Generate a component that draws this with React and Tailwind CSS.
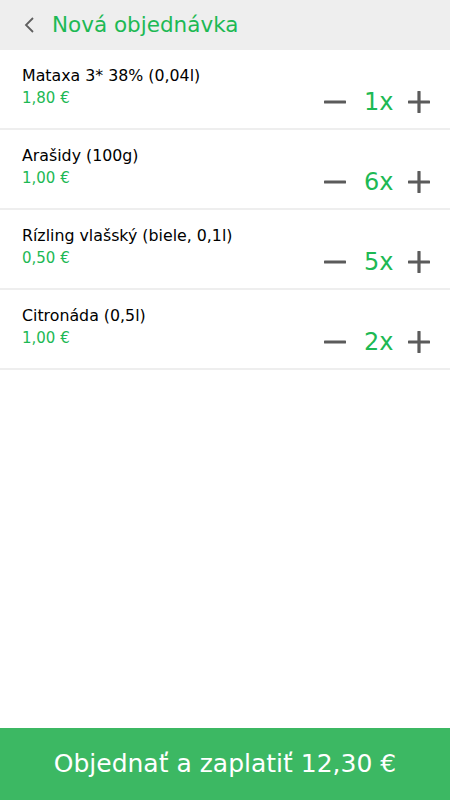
import React, { useState } from 'react';

const items = [
  { name: 'Mataxa 3* 38% (0,04l)', price: '1,80 €', qty: 1 },
  { name: 'Arašidy (100g)', price: '1,00 €', qty: 6 },
  { name: 'Rízling vlašský (biele, 0,1l)', price: '0,50 €', qty: 5 },
  { name: 'Citronáda (0,5l)', price: '1,00 €', qty: 2 },
];

const Minus = () => (
  <svg width="22" height="22" viewBox="0 0 22 22">
    <line x1="1" y1="11" x2="21" y2="11" stroke="#5b5b5b" strokeWidth="3.2" strokeLinecap="round" />
  </svg>
);

const Plus = () => (
  <svg width="22" height="22" viewBox="0 0 22 22">
    <line x1="1" y1="11" x2="21" y2="11" stroke="#5b5b5b" strokeWidth="3.2" strokeLinecap="round" />
    <line x1="11" y1="1" x2="11" y2="21" stroke="#5b5b5b" strokeWidth="3.2" strokeLinecap="round" />
  </svg>
);

const App = () => {
  const [order] = useState(items);

  return (
    <div className="h-[800px] w-[450px] flex flex-col bg-white font-['DejaVu_Sans',sans-serif]">
      {/* header */}
      <div className="h-[50px] bg-[#eeeeee] flex items-center pl-6 gap-4 shrink-0">
        <svg width="12" height="18" viewBox="0 0 12 18">
          <polyline points="9,2 2,9 9,16" fill="none" stroke="#5f5f5f" strokeWidth="1.8" />
        </svg>
        <h1 className="text-[#1db954] text-[21.5px]">Nová objednávka</h1>
      </div>

      {/* items */}
      <div className="flex-1">
        {order.map((it) => (
          <div key={it.name} className="h-[80px] border-b-2 border-[#eeeeee] flex justify-between pl-[22px] pr-5">
            <div className="pt-4">
              <p className="text-[15.8px] leading-5 text-black">{it.name}</p>
              <p className="text-[15px] leading-[24px] text-[#1db954]">{it.price}</p>
            </div>
            <div className="flex items-center gap-[18px] pt-[26px]">
              <Minus />
              <span className="text-[#1db954] text-[24px] w-[26px] text-center">{it.qty}x</span>
              <Plus />
            </div>
          </div>
        ))}
      </div>

      {/* footer */}
      <button className="h-[72px] shrink-0 bg-[#3cb863] text-white text-[25px]">
        Objednať a zaplatiť 12,30 €
      </button>
    </div>
  );
};

export default App;
